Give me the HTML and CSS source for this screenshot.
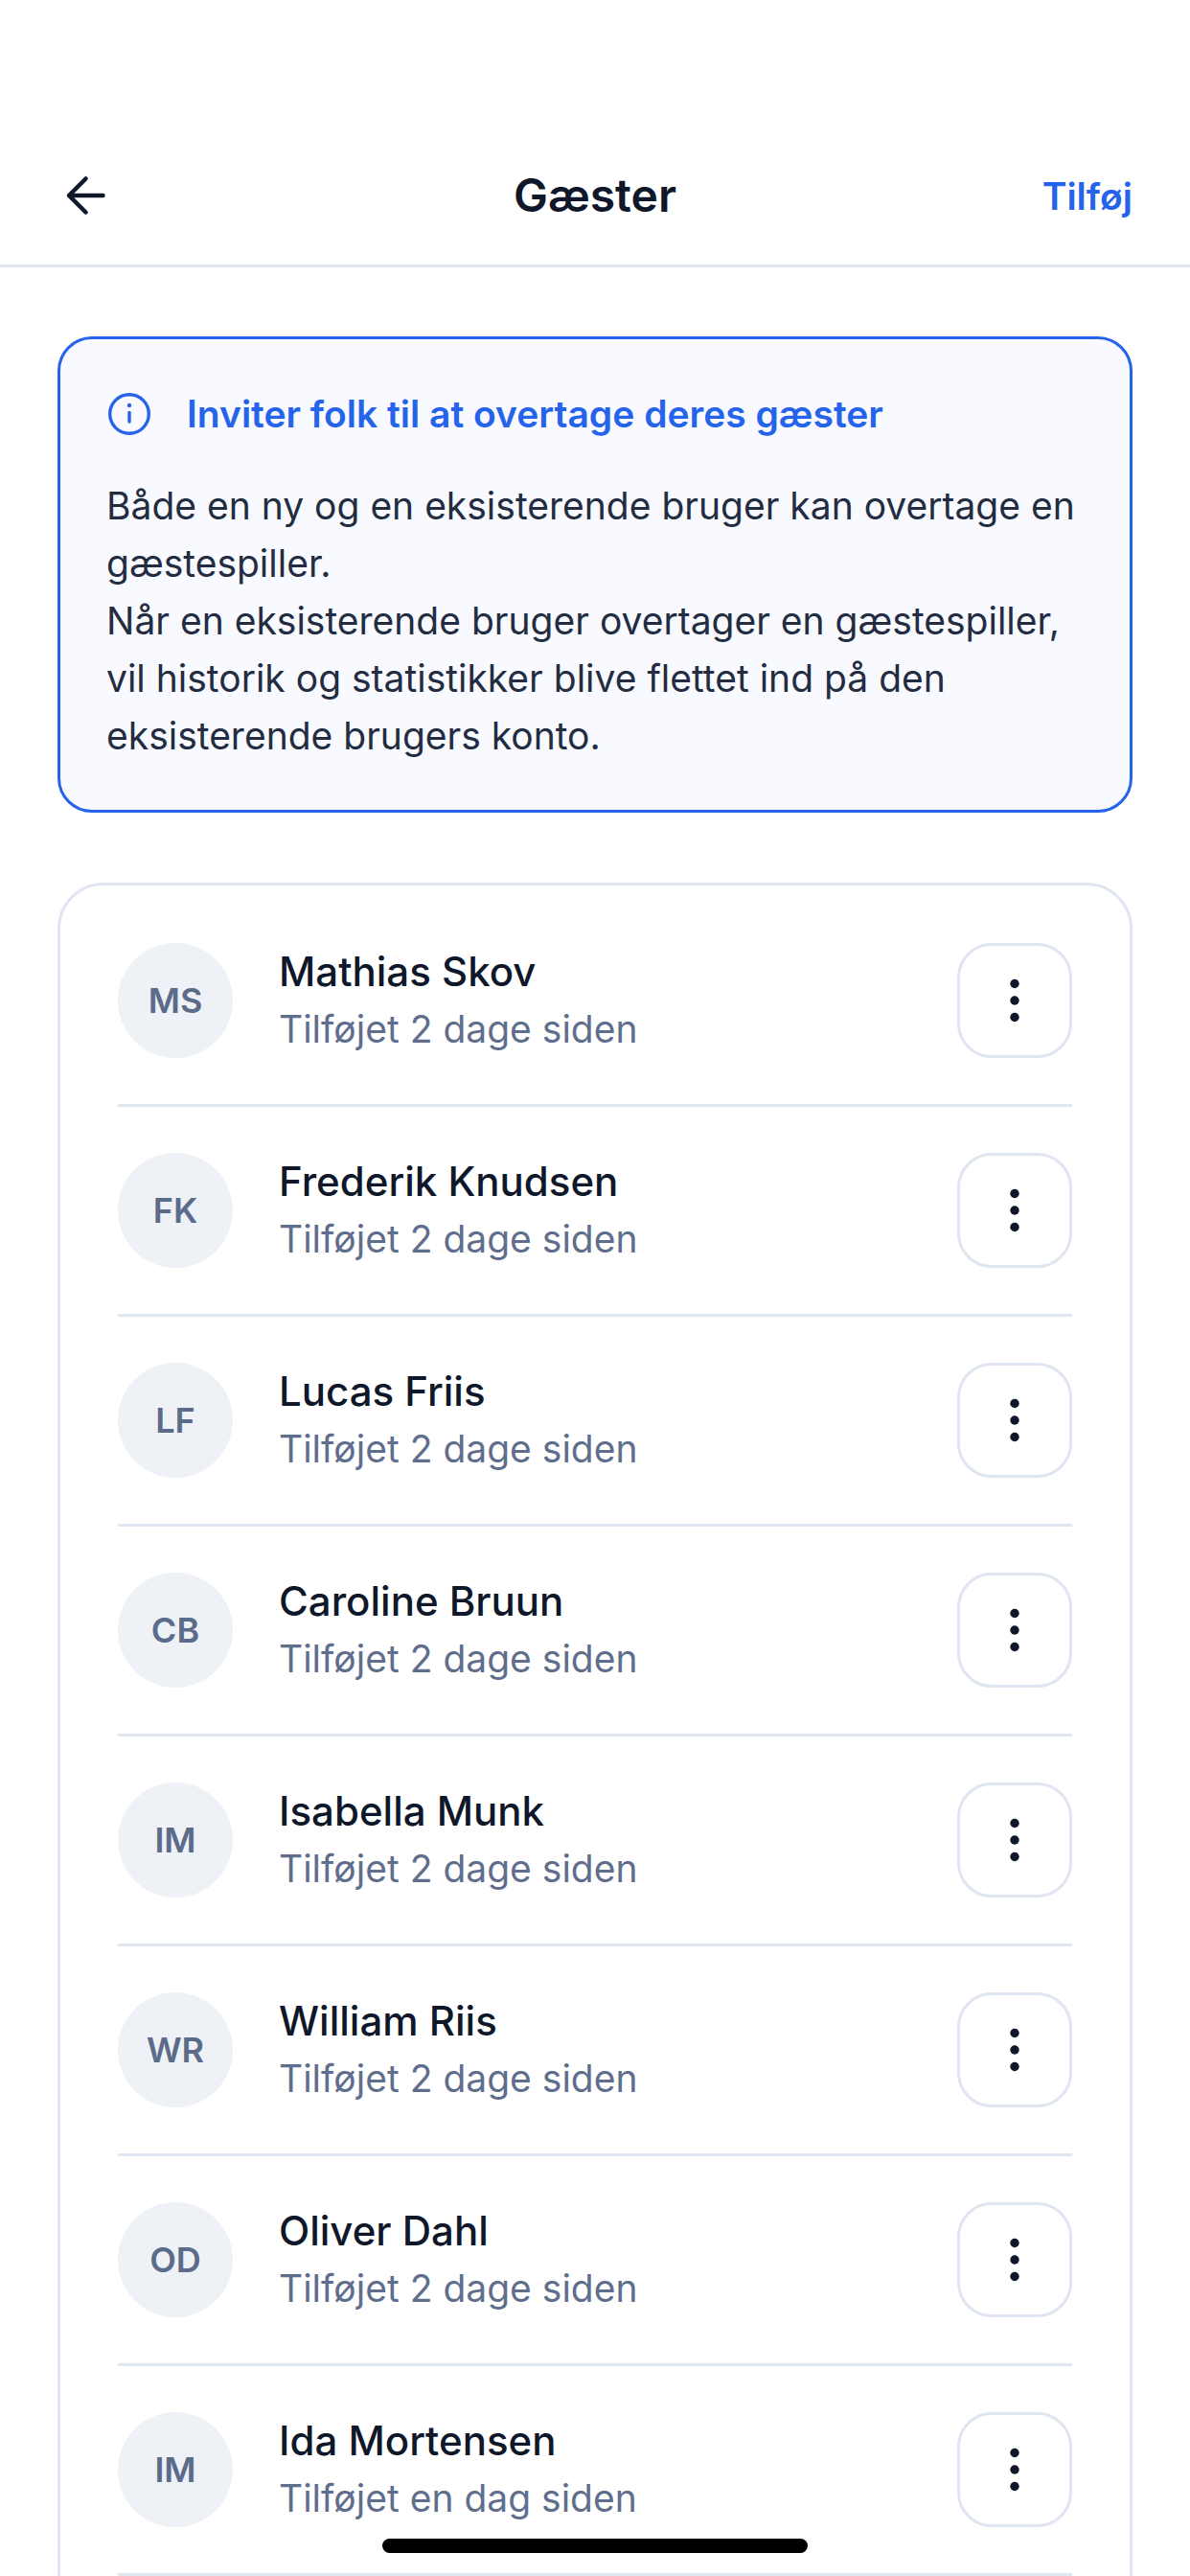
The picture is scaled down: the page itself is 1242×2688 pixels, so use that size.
FILE: index.html
```html
<!DOCTYPE html>
<html>
<head>
    <title>Gæster</title>
    <link rel="stylesheet" href="styles.css">
</head>
<body>
    <div class="screen">
        <!-- Topbar -->
        <div class="topbar">
            <svg class="back" viewBox="0 0 72 72" fill="none">
                <path d="M12 36H47.5M12 36L29.5 18.5M12 36L29.5 53.5" stroke="#0f172a" stroke-width="4.5" stroke-linecap="round" stroke-linejoin="round"/>
            </svg>
            <h1>Gæster</h1>
            <a class="add">Tilføj</a>
        </div>

        <div class="content">
            <!-- Info boks -->
            <div class="info">
                <div class="info-head">
                    <svg class="info-icon" viewBox="0 0 48 48" fill="none">
                        <circle cx="24" cy="24" r="20.3" stroke="#2563eb" stroke-width="3.4"/>
                        <circle cx="24" cy="15" r="2.2" fill="#2563eb"/>
                        <path d="M24 22.5V32" stroke="#2563eb" stroke-width="3.4" stroke-linecap="round"/>
                    </svg>
                    <h2>Inviter folk til at overtage deres gæster</h2>
                </div>
                <p>Både en ny og en eksisterende bruger kan overtage en gæstespiller.<br>Når en eksisterende bruger overtager en gæstespiller, vil historik og statistikker blive flettet ind på den eksisterende brugers konto.</p>
            </div>

            <!-- Gæsteliste -->
            <div class="guests" id="guests"></div>
        </div>

        <div class="home-bar"></div>
    </div>

<script>
const gaester = [
    ['MS', 'Mathias Skov', 'Tilføjet 2 dage siden'],
    ['FK', 'Frederik Knudsen', 'Tilføjet 2 dage siden'],
    ['LF', 'Lucas Friis', 'Tilføjet 2 dage siden'],
    ['CB', 'Caroline Bruun', 'Tilføjet 2 dage siden'],
    ['IM', 'Isabella Munk', 'Tilføjet 2 dage siden'],
    ['WR', 'William Riis', 'Tilføjet 2 dage siden'],
    ['OD', 'Oliver Dahl', 'Tilføjet 2 dage siden'],
    ['IM', 'Ida Mortensen', 'Tilføjet en dag siden']
];

const liste = document.getElementById('guests');
gaester.forEach(([initialer, navn, tilfoejet]) => {
    const row = document.createElement('div');
    row.className = 'guest';
    row.innerHTML = `
        <div class="avatar">${initialer}</div>
        <div class="guest-text">
            <div class="name">${navn}</div>
            <div class="added">${tilfoejet}</div>
        </div>
        <div class="more">
            <svg viewBox="0 0 72 72" fill="#0f172a">
                <circle cx="36" cy="18.5" r="4.7"/>
                <circle cx="36" cy="36" r="4.7"/>
                <circle cx="36" cy="53.5" r="4.7"/>
            </svg>
        </div>
    `;
    liste.appendChild(row);
});
</script>
</body>
</html>
```

FILE: styles.css
```css
* { box-sizing: border-box; }
html, body { margin: 0; height: 2688px; overflow: hidden; background: #fff; }
body { font-family: Inter, "Noto Sans", sans-serif; color: #0f172a; }

.screen { position: relative; width: 1242px; height: 2688px; overflow: hidden; }

.topbar { display: grid; grid-template-columns: 1fr auto 1fr; align-items: center; height: 279px; padding: 168px 60px 36px; border-bottom: 3px solid #dfe5f1; }
.topbar h1 { margin: 0; font-size: 48px; font-weight: 600; line-height: 72px; }
.back { display: block; width: 72px; height: 72px; }
.add { justify-self: end; font-size: 39px; font-weight: 600; color: #2563eb; }

.content { padding: 72px 60px 0; }

.info { height: 497px; padding: 54px 48px 0; background: #f8faff; border: 3px solid #2563eb; border-radius: 36px; }
.info-head { display: flex; align-items: center; gap: 36px; height: 48px; }
.info-icon { width: 48px; height: 48px; flex: none; }
.info-head h2 { margin: 0; font-size: 39px; font-weight: 600; color: #2563eb; line-height: 60px; }
.info p { margin: 42px 0 0; font-size: 39px; line-height: 60px; color: #232c40; }

.guests { margin-top: 73px; padding: 60px 60px 0; border: 3px solid #dfe5f1; border-radius: 48px; }
.guest { display: flex; align-items: center; height: 171px; padding-bottom: 48px; margin-bottom: 48px; border-bottom: 3px solid #dfe5f1; }
.avatar { flex: none; display: flex; align-items: center; justify-content: center; width: 120px; height: 120px; border-radius: 50%; background: #eef1f6; font-size: 36px; font-weight: 600; color: #5b6b8a; }
.guest-text { flex: 1; margin-left: 48px; }
.name { font-size: 42px; font-weight: 500; line-height: 60px; }
.added { font-size: 39px; line-height: 60px; color: #5f6e8c; }
.more { flex: none; width: 120px; height: 120px; padding: 21px; border: 3px solid #dfe5f1; border-radius: 36px; }
.more svg { display: block; width: 72px; height: 72px; }

.home-bar { position: absolute; left: 399px; top: 2649px; width: 444px; height: 15px; border-radius: 8px; background: #000; }
```
